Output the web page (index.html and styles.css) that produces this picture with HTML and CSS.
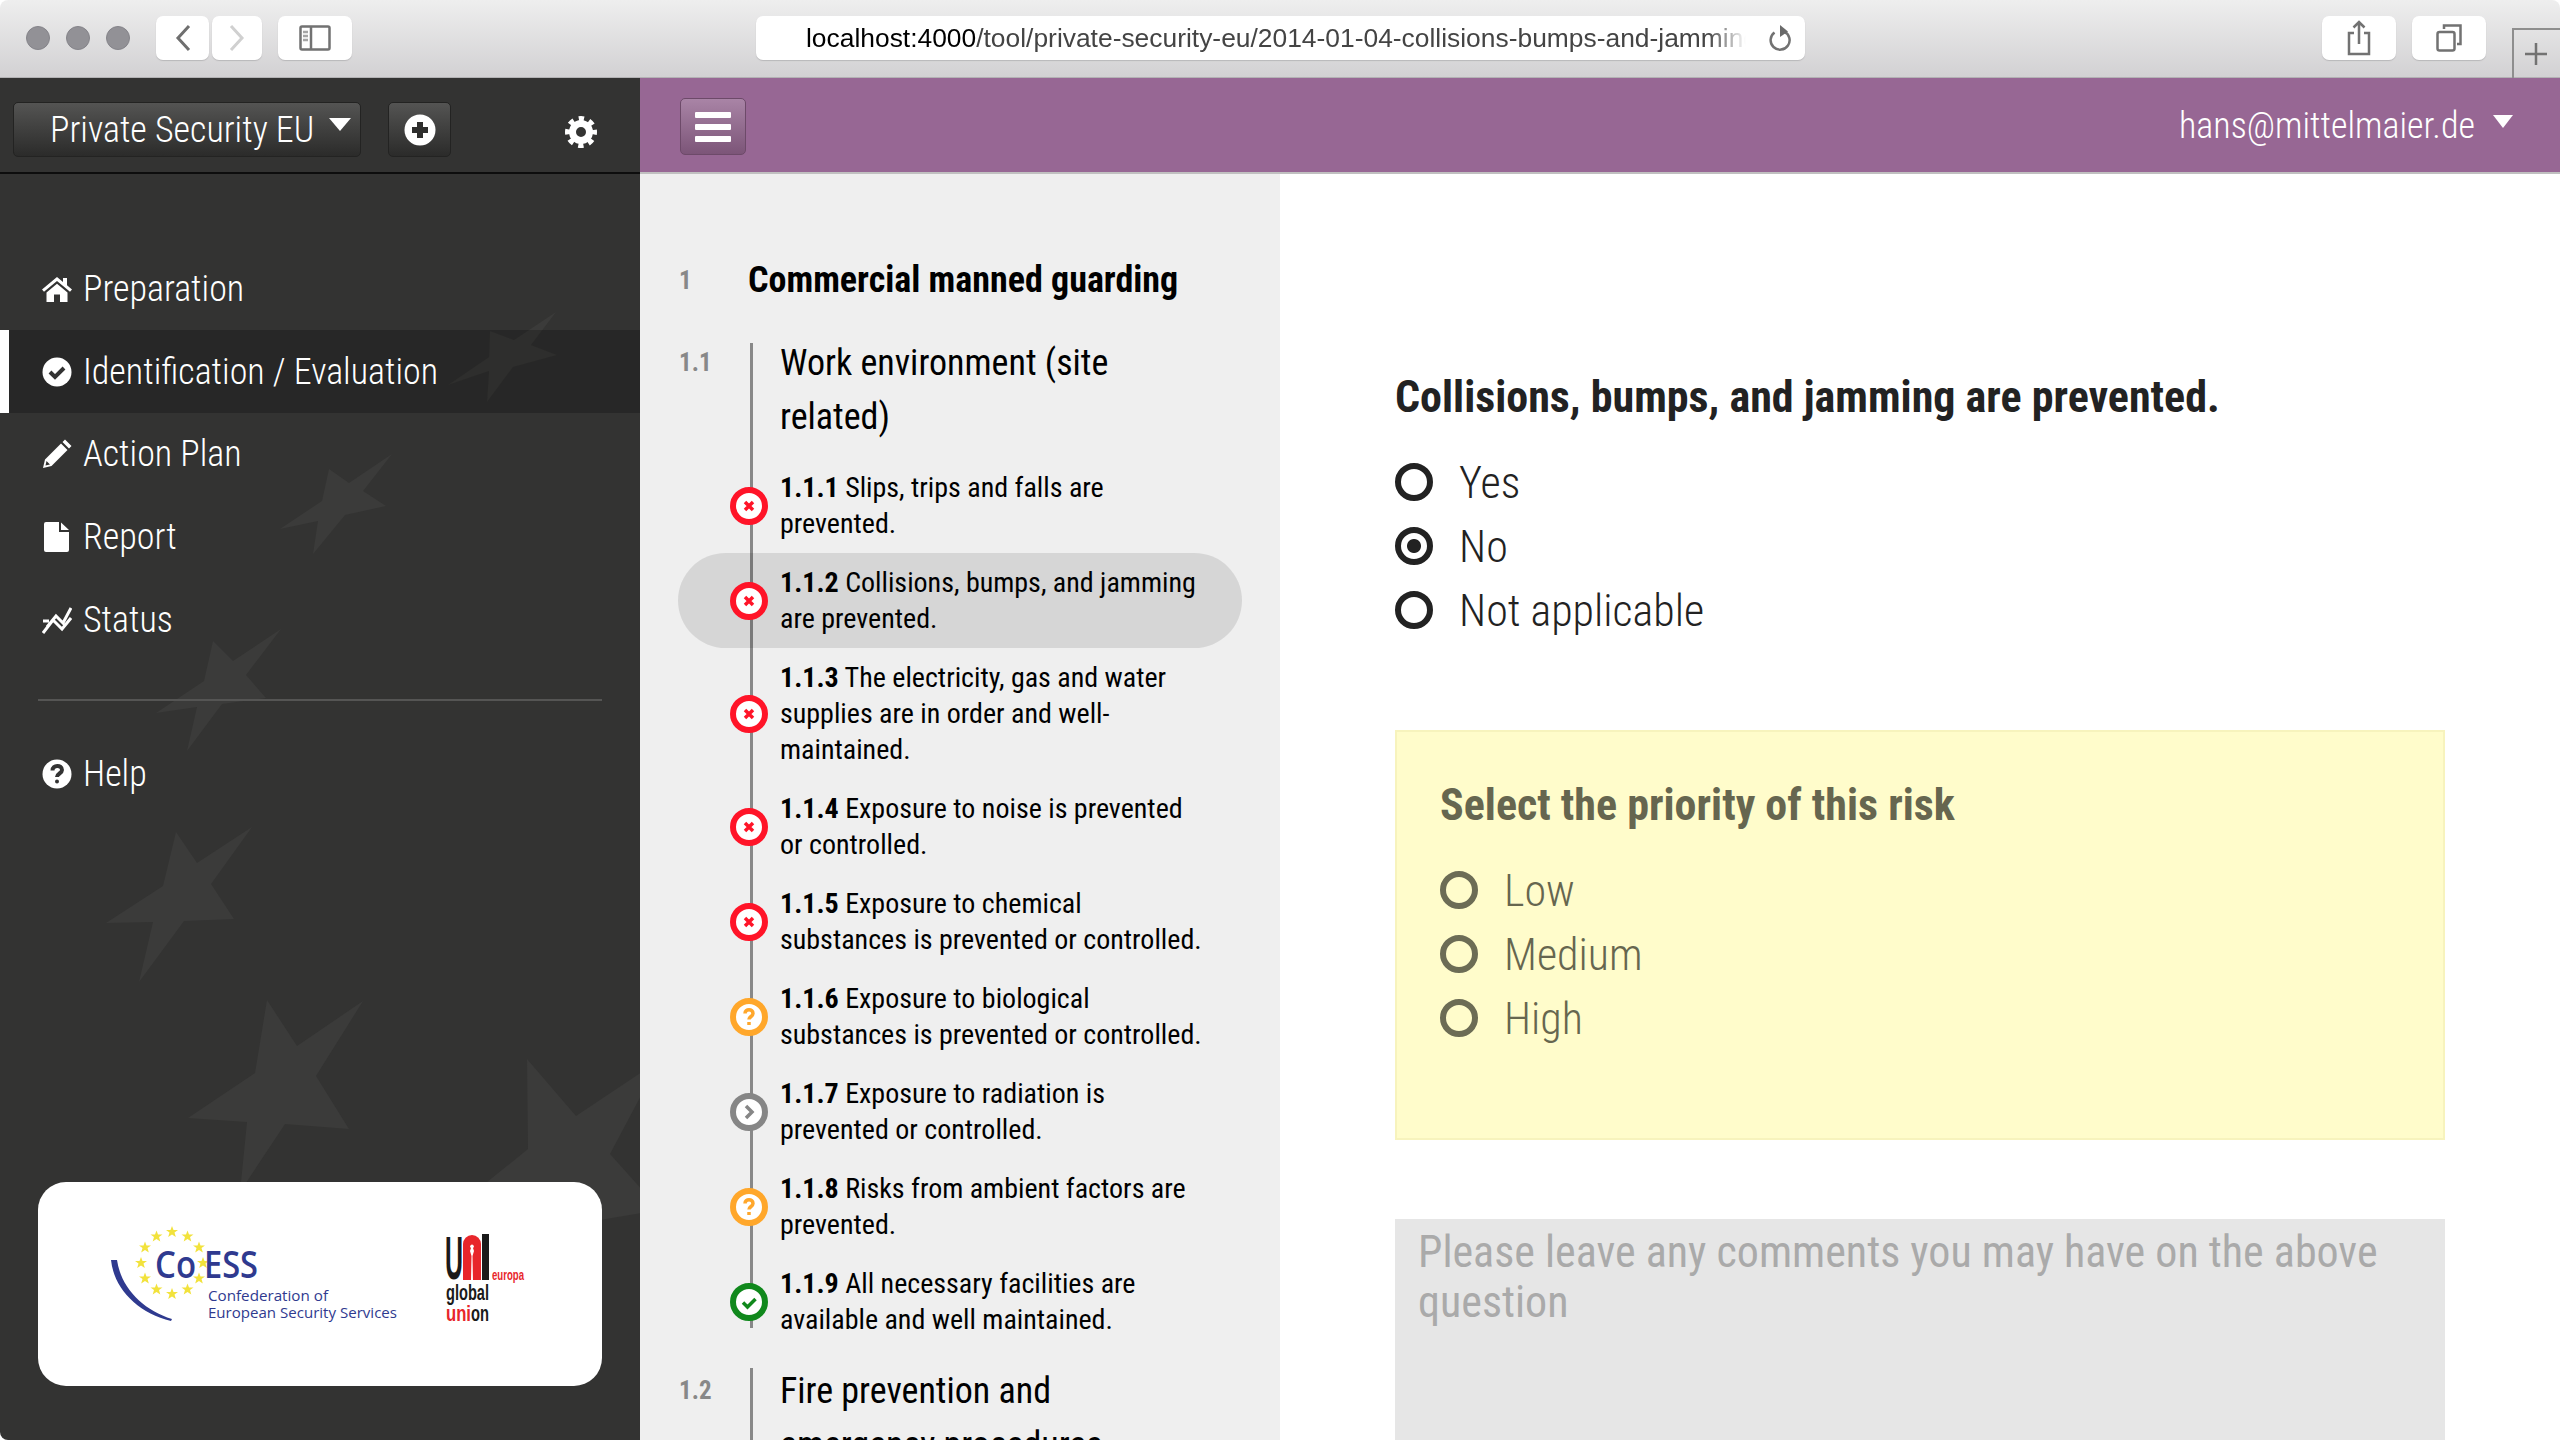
FILE: index.html
```html
<!DOCTYPE html>
<html lang="en">
<head>
<meta charset="utf-8">
<title>Private Security EU</title>
<link rel="stylesheet" href="styles.css">
</head>
<body>
<div class="window">
  <div class="chrome">
    <div class="lights"><i></i><i></i><i></i></div>
    <div class="pair">
      <button class="cbtn back"><svg width="20" height="30" viewBox="0 0 20 30"><path d="M16 3 5 15l11 12" class="cs"/></svg></button>
      <button class="cbtn fwd"><svg width="20" height="30" viewBox="0 0 20 30"><path d="M4 3l11 12L4 27" class="cs faint"/></svg></button>
    </div>
    <button class="cbtn side"><svg width="32" height="26" viewBox="0 0 32 26"><rect x="1.500" y="1.500" width="29" height="23" rx="1.500" class="cs2"/><path d="M12 1.500v23" class="cs2"/><path d="M4 7h5M4 11h5M4 15h5" class="cs2 lite"/></svg></button>
    <div class="url">
      <span class="url-text"><span class="host">localhost:4000</span>/tool/private-security-eu/2014-01-04-collisions-bumps-and-jamming-are-prevented</span>
      <svg class="reload" width="24" height="30" viewBox="0 0 24 30"><path d="M16 8.500a9.500 9.500 0 1 1-9.500 1" class="cs2"/><path d="M12 2l8 6.500-8 5.500z" class="cf"/></svg>
    </div>
    <div class="chrome-right">
      <button class="cbtn tool"><svg width="24" height="36" viewBox="0 0 24 36"><path d="M7 13H2v21h20V13h-5M12 24V2M6.500 7.500 12 2l5.500 5.500" class="cs2"/></svg></button>
      <button class="cbtn tool"><svg width="26" height="28" viewBox="0 0 26 28"><rect x="1.500" y="8" width="17" height="18.500" rx="2" class="cs2"/><path d="M8 5V1.500h16.500V20H21" class="cs2"/></svg></button>
      <div class="newtab"><svg width="24" height="24" viewBox="0 0 24 24"><path d="M12 1v22M1 12h22" class="cs2"/></svg></div>
    </div>
  </div>

  <div class="app">
    <aside class="sidebar">
      <svg class="stars" width="640" height="1440" viewBox="0 0 640 1440" aria-hidden="true">
        <polygon points="556,312 531,345 557,355 513,367 487,402 489,371 448,385 489,357 490,331 514,340"/>
        <polygon points="392,454 363,491 386,506 345,515 313,554 318,521 280,529 322,501 329,469 349,483"/>
        <polygon points="281,629 246,675 266,698 222,704 187,751 197,707 156,713 204,681 213,641 233,661"/>
        <polygon points="252,827 211,884 234,919 184,921 139,982 153,922 106,923 163,886 176,832 197,863"/>
        <polygon points="363,1001 316,1076 349,1129 285,1124 240,1192 247,1122 188,1118 255,1073 267,1000 297,1046"/>
        <polygon points="527,1059 576,1116 660,1060 610,1154 660,1210 600,1220 500,1260 440,1220 528,1149"/>
      </svg>
      <div class="side-head">
        <button class="dark-btn picker"><span>Private Security EU</span><i class="caret"></i></button>
        <button class="dark-btn add"><svg width="32" height="32" viewBox="0 0 32 32"><circle cx="16" cy="16" r="15.500" class="wf"/><path d="M16 8v16M8 16h16" class="plus"/></svg></button>
        <svg class="gear" width="32" height="32" viewBox="0 0 32 32"><circle cx="16" cy="16" r="8.500" class="gear-core"/><circle cx="16" cy="16" r="13.500" class="gear-teeth"/></svg>
      </div>
      <nav class="menu">
        <a class="mi"><svg class="mic" viewBox="0 0 30 30"><path class="wf" d="M15 3 0 15.500l2 2.300L15 7l13 10.800 2-2.300-5-4.200V4h-4v4zM4.500 18.500 15 9.700l10.500 8.800V28H18v-7.500h-6V28H4.500z"/></svg><span>Preparation</span></a>
        <a class="mi active"><svg class="mic" viewBox="0 0 30 30"><circle cx="15" cy="15" r="14.500" class="wf"/><path d="M8 15l5 5 9-9" class="nick"/></svg><span>Identification / Evaluation</span></a>
        <a class="mi"><svg class="mic" viewBox="0 0 30 30"><path class="wf" d="M23 .500 29.500 7 27 9.500 20.500 3zM19 4.500 25.500 11 9.500 27 1 29l2-8.500zM4.500 22 3.500 26.500 8 25.500z"/></svg><span>Action Plan</span></a>
        <a class="mi"><svg class="mic" viewBox="0 0 30 30"><path class="wf" d="M4 0h13v10h10v18a2 2 0 0 1-2 2H4a2 2 0 0 1-2-2V2a2 2 0 0 1 2-2zM19 .500 27 8h-8z"/></svg><span>Report</span></a>
        <a class="mi"><svg class="mic" viewBox="0 0 30 30"><path class="zig" d="M1 16h6M1 28l10-13 9 9 9-11M5 22l9-11 7 7 8-15"/></svg><span>Status</span></a>
        <hr class="rule">
        <a class="mi"><svg class="mic" viewBox="0 0 30 30"><circle cx="15" cy="15" r="14.500" class="wf"/><path d="M10.500 11.500c0-6 9.500-6 9.500-.5 0 3.500-5 3.500-5 7" class="nick"/><circle cx="15" cy="22.500" r="2" class="dk"/></svg><span>Help</span></a>
      </nav>
      <div class="logos">
        <svg width="564" height="204" viewBox="38 1182 564 204" role="img" aria-label="CoESS and UNI europa logos">
          <path class="blue" d="M111 1260h6c4 28 26 50 55 59l-1 2c-33-8-57-32-60-61z"/>
          <g class="ystars">
            <polygon id="ys" points="172,1226 173.500,1230 178,1230 174.500,1232.600 175.800,1237 172,1234.400 168.200,1237 169.500,1232.600 166,1230 170.500,1230"/>
            <use href="#ys" x="15.500" y="4.500"/><use href="#ys" x="27" y="15.500"/><use href="#ys" x="31" y="31"/><use href="#ys" x="27" y="46.500"/><use href="#ys" x="15.500" y="57.500"/><use href="#ys" y="62"/><use href="#ys" x="-15.500" y="57.500"/><use href="#ys" x="-27" y="46.500"/><use href="#ys" x="-31" y="31"/><use href="#ys" x="-27" y="15.500"/><use href="#ys" x="-15.500" y="4.500"/>
          </g>
          <text class="co t-co" x="155" y="1278" textLength="41" lengthAdjust="spacingAndGlyphs">Co</text>
          <text class="co t-co" x="204" y="1278" textLength="54" lengthAdjust="spacingAndGlyphs">ESS</text>
          <text class="co t-sm" x="208" y="1301" textLength="120" lengthAdjust="spacingAndGlyphs">Confederation of</text>
          <text class="co t-sm" x="208" y="1318" textLength="189" lengthAdjust="spacingAndGlyphs">European Security Services</text>
          <text class="uni t-u" x="445" y="1279" textLength="18" lengthAdjust="spacingAndGlyphs">U</text>
          <path class="red" d="M463 1280v-36a9 9 0 0 1 18 0v36z"/>
          <path class="wf" d="M471 1280l.500-24-1.500-5 1-3a1.800 1.800 0 1 1 2 0l1 3-1.500 5 .500 24z"/>
          <rect class="blk" x="482" y="1234" width="7" height="46"/>
          <text class="red t-eu" x="492" y="1280" textLength="32" lengthAdjust="spacingAndGlyphs">europa</text>
          <text class="blk t-gl" x="446" y="1300" textLength="43" lengthAdjust="spacingAndGlyphs">global</text>
          <text class="red t-gl" x="446" y="1321" textLength="25" lengthAdjust="spacingAndGlyphs">uni</text>
          <text class="blk t-gl" x="471" y="1321" textLength="18" lengthAdjust="spacingAndGlyphs">on</text>
        </svg>
      </div>
    </aside>

    <div class="content">
      <header class="top">
        <button class="burger"><i></i><i></i><i></i></button>
        <div class="user"><span>hans@mittelmaier.de</span><i class="caret small"></i></div>
      </header>
      <div class="panes">
        <section class="tree">
          <h2 class="mod"><span class="num">1</span><span>Commercial manned guarding</span></h2>

          <div class="sec">
            <span class="num">1.1</span>
            <div class="sec-body">
              <h3>Work environment (site related)</h3>
              <ol class="items">
                <li class="item red-s"><svg class="st" viewBox="0 0 38 38"><circle cx="19" cy="19" r="16"/><path d="M15 15l8 8M23 15l-8 8"/></svg><b>1.1.1</b> Slips, trips and falls are prevented.</li>
                <li class="item red-s current"><svg class="st" viewBox="0 0 38 38"><circle cx="19" cy="19" r="16"/><path d="M15 15l8 8M23 15l-8 8"/></svg><b>1.1.2</b> Collisions, bumps, and jamming are prevented.</li>
                <li class="item red-s tall"><svg class="st" viewBox="0 0 38 38"><circle cx="19" cy="19" r="16"/><path d="M15 15l8 8M23 15l-8 8"/></svg><b>1.1.3</b> The electricity, gas and water supplies are in order and well-maintained.</li>
                <li class="item red-s"><svg class="st" viewBox="0 0 38 38"><circle cx="19" cy="19" r="16"/><path d="M15 15l8 8M23 15l-8 8"/></svg><b>1.1.4</b> Exposure to noise is prevented or controlled.</li>
                <li class="item red-s"><svg class="st" viewBox="0 0 38 38"><circle cx="19" cy="19" r="16"/><path d="M15 15l8 8M23 15l-8 8"/></svg><b>1.1.5</b> Exposure to chemical substances is prevented or controlled.</li>
                <li class="item org-s"><svg class="st" viewBox="0 0 38 38"><circle cx="19" cy="19" r="16"/><path d="M15 15.500c0-5 8-5 8 0 0 3-4 3-4 6M19 24v3"/></svg><b>1.1.6</b> Exposure to biological substances is prevented or controlled.</li>
                <li class="item gry-s"><svg class="st" viewBox="0 0 38 38"><circle cx="19" cy="19" r="16"/><path d="M16 13l6 6-6 6"/></svg><b>1.1.7</b> Exposure to radiation is prevented or controlled.</li>
                <li class="item org-s"><svg class="st" viewBox="0 0 38 38"><circle cx="19" cy="19" r="16"/><path d="M15 15.500c0-5 8-5 8 0 0 3-4 3-4 6M19 24v3"/></svg><b>1.1.8</b> Risks from ambient factors are prevented.</li>
                <li class="item grn-s"><svg class="st" viewBox="0 0 38 38"><circle cx="19" cy="19" r="16"/><path d="M13 19.500l4.500 4.500 8-8"/></svg><b>1.1.9</b> All necessary facilities are available and well maintained.</li>
              </ol>
            </div>
          </div>

          <div class="sec next">
            <span class="num">1.2</span>
            <div class="sec-body">
              <h3>Fire prevention and emergency procedures</h3>
            </div>
          </div>
        </section>

        <main class="question">
          <h1>Collisions, bumps, and jamming are prevented.</h1>
          <div class="choices">
            <label class="choice"><i class="radio"></i>Yes</label>
            <label class="choice"><i class="radio on"></i>No</label>
            <label class="choice"><i class="radio"></i>Not applicable</label>
          </div>
          <div class="priority">
            <h4>Select the priority of this risk</h4>
            <div class="choices">
              <label class="choice"><i class="radio"></i>Low</label>
              <label class="choice"><i class="radio"></i>Medium</label>
              <label class="choice"><i class="radio"></i>High</label>
            </div>
          </div>
          <div class="comments">Please leave any comments you may have on the above question</div>
        </main>
      </div>
    </div>
  </div>
</div>
</body>
</html>
```

FILE: styles.css
```css
* { box-sizing: border-box; }
html, body { margin: 0; height: 100%; background: #fff; overflow: hidden; }
body { font-family: "Roboto Condensed", Roboto, "Liberation Sans", sans-serif; font-stretch: 75%; }
button { font: inherit; border: 0; padding: 0; }
i { font-style: normal; }

.window { width: 2560px; height: 1440px; display: flex; flex-direction: column; overflow: hidden; border-radius: 8px 8px 0 8px; }

/* browser chrome */
.chrome { height: 78px; flex: none; display: flex; align-items: flex-start; padding-top: 16px; padding-left: 26px; background: linear-gradient(#eeeeee, #d2d1d3); border-bottom: 1px solid #b3b2b4; }
.lights { display: flex; gap: 16px; margin-top: 10px; margin-right: 26px; }
.lights i { width: 24px; height: 24px; border-radius: 50%; background: #929196; border: 1px solid #85848a; }
.cbtn { height: 44px; background: #fff; border-radius: 7px; box-shadow: 0 1px 1px #b9b8ba; display: flex; align-items: center; justify-content: center; }
.pair { display: flex; gap: 3px; margin-right: 16px; }
.back { width: 53px; }
.fwd { width: 50px; }
.side { width: 74px; }
.cs { fill: none; stroke: #6f6f6f; stroke-width: 3; }
.cs.faint { stroke: #d0d0d0; }
.cs2 { fill: none; stroke: #727272; stroke-width: 2.500; }
.cs2.lite { stroke: #a5a5a5; }
.cf { fill: #6a6a6a; }
.url { width: 1049px; height: 44px; margin-left: 404px; background: #fff; border-radius: 7px; box-shadow: 0 1px 1px #b9b8ba; display: flex; align-items: center; position: relative; overflow: hidden; padding-left: 50px; }
.url-text { font-family: "Liberation Sans", Arial, sans-serif; font-stretch: normal; font-size: 26.400px; color: #444; white-space: nowrap; width: 940px; overflow: hidden; -webkit-mask-image: linear-gradient(90deg, #000 96%, transparent); mask-image: linear-gradient(90deg, #000 96%, transparent); }
.host { color: #000; }
.reload { margin-left: 22px; flex: none; }
.chrome-right { margin-left: auto; display: flex; gap: 16px; }
.tool { width: 74px; }
.newtab { width: 48px; height: 50px; margin-top: 12px; margin-left: 10px; border-left: 2px solid #8e8e8e; border-top: 2px solid #8e8e8e; display: flex; align-items: center; padding-left: 10px; }

/* app */
.app { flex: 1; display: flex; min-height: 0; }
.sidebar { width: 640px; flex: none; background: #333332; position: relative; display: flex; flex-direction: column; }
.stars { position: absolute; left: 0; top: -78px; fill: #3b3b3a; }
.side-head { height: 96px; border-bottom: 2px solid #0d0d0d; display: flex; align-items: flex-start; padding: 24px 0 0 13px; position: relative; }
.dark-btn { height: 55px; background: linear-gradient(#545453, #2b2b2a); border: 1px solid #232322; border-radius: 5px; color: #fff; display: flex; align-items: center; }
.picker { width: 348px; font-size: 36px; font-weight: 300; padding-left: 36px; white-space: nowrap; }
.caret { display: block; width: 0; height: 0; border-left: 11px solid transparent; border-right: 11px solid transparent; border-top: 13px solid #fff; }
.picker .caret { margin-left: 15px; margin-top: -10px; }
.add { width: 63px; margin-left: 27px; justify-content: center; }
.wf { fill: #fff; }
.plus { stroke: #2e2e2d; stroke-width: 6; fill: none; }
.gear { margin-left: 114px; margin-top: 14px; }
.gear-core { fill: none; stroke: #fff; stroke-width: 7; }
.gear-teeth { fill: none; stroke: #fff; stroke-width: 5; stroke-dasharray: 5.300 5.300; stroke-dashoffset: 2.650; }
.menu { position: relative; padding-top: 73.500px; display: flex; flex-direction: column; }
.mi { height: 82.700px; display: flex; align-items: center; color: #fff; font-size: 36px; font-weight: 300; padding-left: 42px; gap: 11px; }
.mi.active { background: rgba(0,0,0,.22); border-left: 9px solid #fff; padding-left: 33px; }
.mic { width: 30px; height: 30px; flex: none; }
.nick { fill: none; stroke: #333; stroke-width: 4; }
.dk { fill: #333; }
.zig { fill: none; stroke: #fff; stroke-width: 3; }
.rule { width: 564px; height: 2px; margin: 38px 0 32px 38px; border: 0; background: #555554; }
.logos { position: absolute; left: 38px; top: 1104px; width: 564px; height: 204px; background: #fff; border-radius: 28px; }
.logos svg { display: block; font-stretch: normal; }
.blue { fill: #2f3a8f; }
.ystars { fill: #f2e23c; }
.co { fill: #2f3a8f; font-family: "Open Sans", sans-serif; }
.t-co { font-size: 38px; font-weight: 600; }
.t-sm { font-size: 15px; }
.uni { fill: #1a1a1a; font-family: "Liberation Sans", sans-serif; }
.t-u { font-size: 62px; font-weight: 700; }
.red { fill: #e8262b; }
.blk { fill: #1a1a1a; }
.t-eu { font-family: "Liberation Sans", sans-serif; font-size: 15px; font-weight: 700; }
.t-gl { font-family: "Liberation Sans", sans-serif; font-size: 22px; font-weight: 700; }

.content { flex: 1; min-width: 0; display: flex; flex-direction: column; }
.top { height: 96px; flex: none; background: #976794; border-bottom: 2px solid #c0c0c0; display: flex; align-items: flex-start; justify-content: space-between; padding: 20px 47px 0 40px; }
.burger { width: 66px; height: 57px; border: 1px solid #6d4a69; border-radius: 5px; background: linear-gradient(#a984a6, #7c5578); display: flex; flex-direction: column; justify-content: center; align-items: center; gap: 6px; }
.burger i { display: block; width: 36px; height: 6px; background: #fff; border-radius: 1px; }
.user { display: flex; color: #fff; font-size: 36px; font-weight: 300; align-items: center; gap: 18px; height: 56px; }
.caret.small { border-left-width: 10.500px; border-right-width: 10.500px; margin-top: -10px; }

.panes { flex: 1; display: flex; min-height: 0; overflow: hidden; }
.tree { width: 640px; flex: none; background: #efefef; padding: 84px 0 0 38px; color: #000; overflow: hidden; }
.num { width: 72px; flex: none; color: #888; font-weight: 700; font-size: 25px; padding-left: 1px; }
.mod { margin: 0; display: flex; align-items: center; font-size: 36px; font-weight: 700; height: 44px; }
.mod .num { width: 70px; }
.sec { display: flex; margin-top: 41px; }
.sec > .num { line-height: 40px; }
.sec-body { border-left: 3px solid #888; width: 490px; padding-left: 27px; }
.sec-body h3 { margin: -7px 0 0; font-size: 36px; font-weight: 400; line-height: 54px; width: 380px; }
.items { list-style: none; margin: 14px 0 -21px -102px; padding: 0; }
.item { position: relative; width: 564px; padding: 11.500px 36px 11.500px 102px; font-size: 28px; line-height: 36px; border-radius: 48px; }
.item b { font-weight: 700; }
.current { background: rgba(0,0,0,.1); }
.st { position: absolute; left: 52px; top: 50%; margin-top: -19px; width: 38px; height: 38px; fill: #fff; stroke-width: 6; }
.st path { fill: none; stroke-width: 3.500; }
.red-s .st { stroke: #ff1428; }
.org-s .st { stroke: #ffa72b; }
.gry-s .st { stroke: #868686; }
.grn-s .st { stroke: #10881c; }
.next { margin-top: 40px; }
.next > .num { padding-top: 3px; }
.next h3 { width: 400px; margin-top: -4px; }

.question { flex: 1; padding: 193px 115px 0 115px; color: #222; }
h1 { margin: 0; font-size: 44px; font-weight: 700; line-height: 60px; color: #222; }
.choices { display: flex; flex-direction: column; gap: 0; margin-top: 24px; }
.choice { height: 64px; display: flex; align-items: center; gap: 26px; font-size: 44px; font-weight: 300; color: #222; }
.radio { width: 38px; height: 38px; border-radius: 50%; border: 6px solid #222; flex: none; background: #fff; margin-bottom: 2px; }
.radio.on { background: radial-gradient(circle, #222 0 6.500px, #fff 7.500px); }
.priority { margin-top: 87px; height: 410px; background: #fffccb; border: 2px solid #f7f3bd; padding: 43px 43px 0; color: #66664f; }
.priority h4 { margin: 0; font-size: 44px; font-weight: 700; line-height: 60px; }
.priority .choices { margin-top: 24px; }
.priority .choice { color: #66664f; }
.priority .radio { border-color: #6c6c55; background: transparent; }
.comments { margin-top: 79px; height: 400px; background: #e6e6e6; padding: 8px 23px; font-size: 44px; line-height: 50px; color: #aaa; }
```
